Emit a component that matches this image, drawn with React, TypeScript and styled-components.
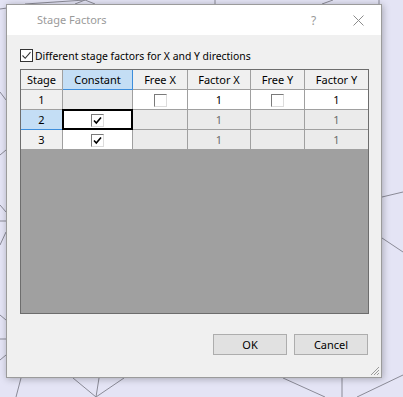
import React from "react";
import styled, { createGlobalStyle, css } from "styled-components";

const GlobalStyle = createGlobalStyle`
  html, body { margin: 0; padding: 0; }
  body {
    width: 403px;
    height: 397px;
    overflow: hidden;
    background: #e4e4f5;
    font-family: "Noto Sans", "Liberation Sans", sans-serif;
  }
`;

const Desktop = styled.div`
  position: relative;
  width: 403px;
  height: 397px;
  background: #e4e4f5;
  overflow: hidden;
`;

const Mesh = styled.svg`
  position: absolute;
  inset: 0;
`;

const Dialog = styled.div`
  position: absolute;
  left: 6px;
  top: 4px;
  width: 376px;
  height: 374px;
  box-sizing: border-box;
  border: 1px solid #9b9b9b;
  background: #f0f0f0;
  box-shadow: 1px 1px 7px rgba(0, 0, 0, 0.28);
  display: flex;
  flex-direction: column;
`;

const TitleBar = styled.div`
  height: 30px;
  flex: none;
  background: #ffffff;
  display: flex;
  align-items: center;
  padding-left: 30px;
`;

const Title = styled.div`
  flex: 1;
  font-size: 11px;
  color: #9a9a9a;
  padding-bottom: 1px;
`;

const TitleButton = styled.div`
  width: 45px;
  height: 30px;
  display: flex;
  align-items: center;
  justify-content: center;
  color: #9a9a9a;
  font-size: 12px;
`;

const Body = styled.div`
  flex: 1;
  display: flex;
  flex-direction: column;
  padding: 14px 13px 0 13px;
`;

const CheckRow = styled.label`
  display: flex;
  align-items: center;
  gap: 2px;
  height: 13px;
  margin-bottom: 7px;
  font-size: 10.4px;
  color: #000;
`;

const FlatBox = styled.span`
  width: 13px;
  height: 13px;
  box-sizing: border-box;
  border: 1px solid #333;
  background: #fff;
  display: flex;
  align-items: center;
  justify-content: center;
`;

const GridBox = styled.div`
  width: 349px;
  height: 245px;
  box-sizing: border-box;
  border: 1px solid #6d6d6d;
  background: #a0a0a0;
  display: grid;
  grid-template-columns: 42px 70px 55px 63px 54px 63px;
  grid-auto-rows: 20px;
  align-content: start;
  font-family: "Noto Sans", sans-serif;
  font-size: 11px;
  font-weight: 400;
`;

type CellKind = "header" | "white" | "gray" | "blue";

const Cell = styled.div<{ $kind: CellKind; $dim?: boolean; $last?: boolean; $sel?: boolean }>`
  position: relative;
  box-sizing: border-box;
  border-right: 1px solid #a0a0a0;
  border-bottom: 1px solid #a0a0a0;
  display: flex;
  align-items: center;
  justify-content: center;
  color: ${(p) => (p.$dim ? "#6b6b6b" : "#000")};
  background: ${(p) =>
    p.$kind === "white"
      ? "#ffffff"
      : p.$kind === "gray"
      ? "#ebebeb"
      : p.$kind === "blue"
      ? "#c4def5"
      : "#f0f0f0"};
  ${(p) =>
    p.$kind === "blue" &&
    css`
      border-right-color: #3e8edb;
      border-bottom-color: #3e8edb;
    `}
  ${(p) =>
    p.$last &&
    css`
      border-right: none;
    `}
  ${(p) =>
    p.$sel &&
    css`
      &::after {
        content: "";
        position: absolute;
        left: -1px;
        top: -1px;
        right: -1px;
        bottom: -1px;
        border: 2px solid #000;
        pointer-events: none;
      }
    `}
`;

const Box3D = styled.span`
  width: 13px;
  height: 13px;
  box-sizing: border-box;
  border-top: 1px solid #7a7a7a;
  border-left: 1px solid #7a7a7a;
  border-right: 1px solid #dcdcdc;
  border-bottom: 1px solid #dcdcdc;
  background: #fff;
  display: flex;
  align-items: center;
  justify-content: center;
  margin-top: 1px;
`;

const ButtonRow = styled.div`
  display: flex;
  justify-content: flex-end;
  gap: 7px;
  margin-top: 20px;
`;

const Button = styled.button`
  width: 74px;
  height: 21px;
  box-sizing: border-box;
  border: 1px solid #adadad;
  background: #e1e1e1;
  font-family: "Noto Sans", "Liberation Sans", sans-serif;
  font-size: 11px;
  color: #000;
  padding: 0;
  display: flex;
  align-items: center;
  justify-content: center;
`;

const Grip = styled.svg`
  position: absolute;
  right: 1px;
  bottom: 1px;
`;

const Check = () => (
  <svg width="9" height="9" viewBox="0 0 9 9">
    <path d="M1 4.5 L3.3 7 L8 1.5" fill="none" stroke="#000" strokeWidth="1.6" />
  </svg>
);

const SoftCheck = () => (
  <svg width="11" height="11" viewBox="0 0 11 11">
    <path d="M1.5 5.5 L4.2 8.3 L9.5 2.2" fill="none" stroke="#333" strokeWidth="1.1" />
  </svg>
);

const lines: [number, number, number, number][] = [
  [0, 9, 7, 8],
  [25, 4, 85, 0],
  [75, 4, 85, 0],
  [85, 0, 95, 4],
  [215, 0, 215, 4],
  [322, 4, 333, 0],
  [379, 0, 379, 4],
  [0, 92, 6, 100],
  [0, 155, 6, 150],
  [0, 205, 6, 212],
  [0, 221, 6, 221],
  [0, 245, 6, 232],
  [0, 315, 6, 320],
  [0, 339, 6, 339],
  [0, 360, 6, 355],
  [382, 197, 403, 192],
  [382, 238, 403, 252],
  [357, 397, 403, 375],
  [21, 378, 16, 397],
  [73, 378, 96, 397],
  [124, 378, 96, 397],
  [99, 378, 96, 397],
  [283, 378, 325, 397],
  [342, 378, 342, 397],
];

const headers = ["Stage", "Constant", "Free X", "Factor X", "Free Y", "Factor Y"];

export default function App() {
  return (
    <>
      <GlobalStyle />
      <Desktop>
        <Mesh width="403" height="397">
          {lines.map(([x1, y1, x2, y2], i) => (
            <line key={i} x1={x1} y1={y1} x2={x2} y2={y2} stroke="#8a8a96" strokeWidth="1" />
          ))}
        </Mesh>
        <Dialog>
          <TitleBar>
            <Title>Stage Factors</Title>
            <TitleButton>?</TitleButton>
            <TitleButton>
              <svg width="11" height="11" viewBox="0 0 11 11">
                <path d="M0.5 0.5 L10.5 10.5 M10.5 0.5 L0.5 10.5" stroke="#8c8c8c" strokeWidth="1" />
              </svg>
            </TitleButton>
          </TitleBar>
          <Body>
            <CheckRow>
              <FlatBox>
                <SoftCheck />
              </FlatBox>
              Different stage factors for X and Y directions
            </CheckRow>
            <GridBox>
              {headers.map((h, i) => (
                <Cell key={h} $kind={i === 1 ? "blue" : "header"} $last={i === 5}>
                  {h}
                </Cell>
              ))}
              <Cell $kind="header">1</Cell>
              <Cell $kind="gray" />
              <Cell $kind="white">
                <Box3D />
              </Cell>
              <Cell $kind="white">1</Cell>
              <Cell $kind="white">
                <Box3D />
              </Cell>
              <Cell $kind="white" $last>
                1
              </Cell>

              <Cell $kind="blue">2</Cell>
              <Cell $kind="white" $sel>
                <Box3D>
                  <Check />
                </Box3D>
              </Cell>
              <Cell $kind="gray" />
              <Cell $kind="gray" $dim>
                1
              </Cell>
              <Cell $kind="gray" />
              <Cell $kind="gray" $dim $last>
                1
              </Cell>

              <Cell $kind="header">3</Cell>
              <Cell $kind="white">
                <Box3D>
                  <Check />
                </Box3D>
              </Cell>
              <Cell $kind="gray" />
              <Cell $kind="gray" $dim>
                1
              </Cell>
              <Cell $kind="gray" />
              <Cell $kind="gray" $dim $last>
                1
              </Cell>
            </GridBox>
            <ButtonRow>
              <Button>OK</Button>
              <Button>Cancel</Button>
            </ButtonRow>
          </Body>
          <Grip width="11" height="11" viewBox="0 0 11 11">
            <path d="M10 2 L2 10 M10 5 L5 10 M10 8 L8 10" stroke="#9a9a9a" strokeWidth="1" />
          </Grip>
        </Dialog>
      </Desktop>
    </>
  );
}
